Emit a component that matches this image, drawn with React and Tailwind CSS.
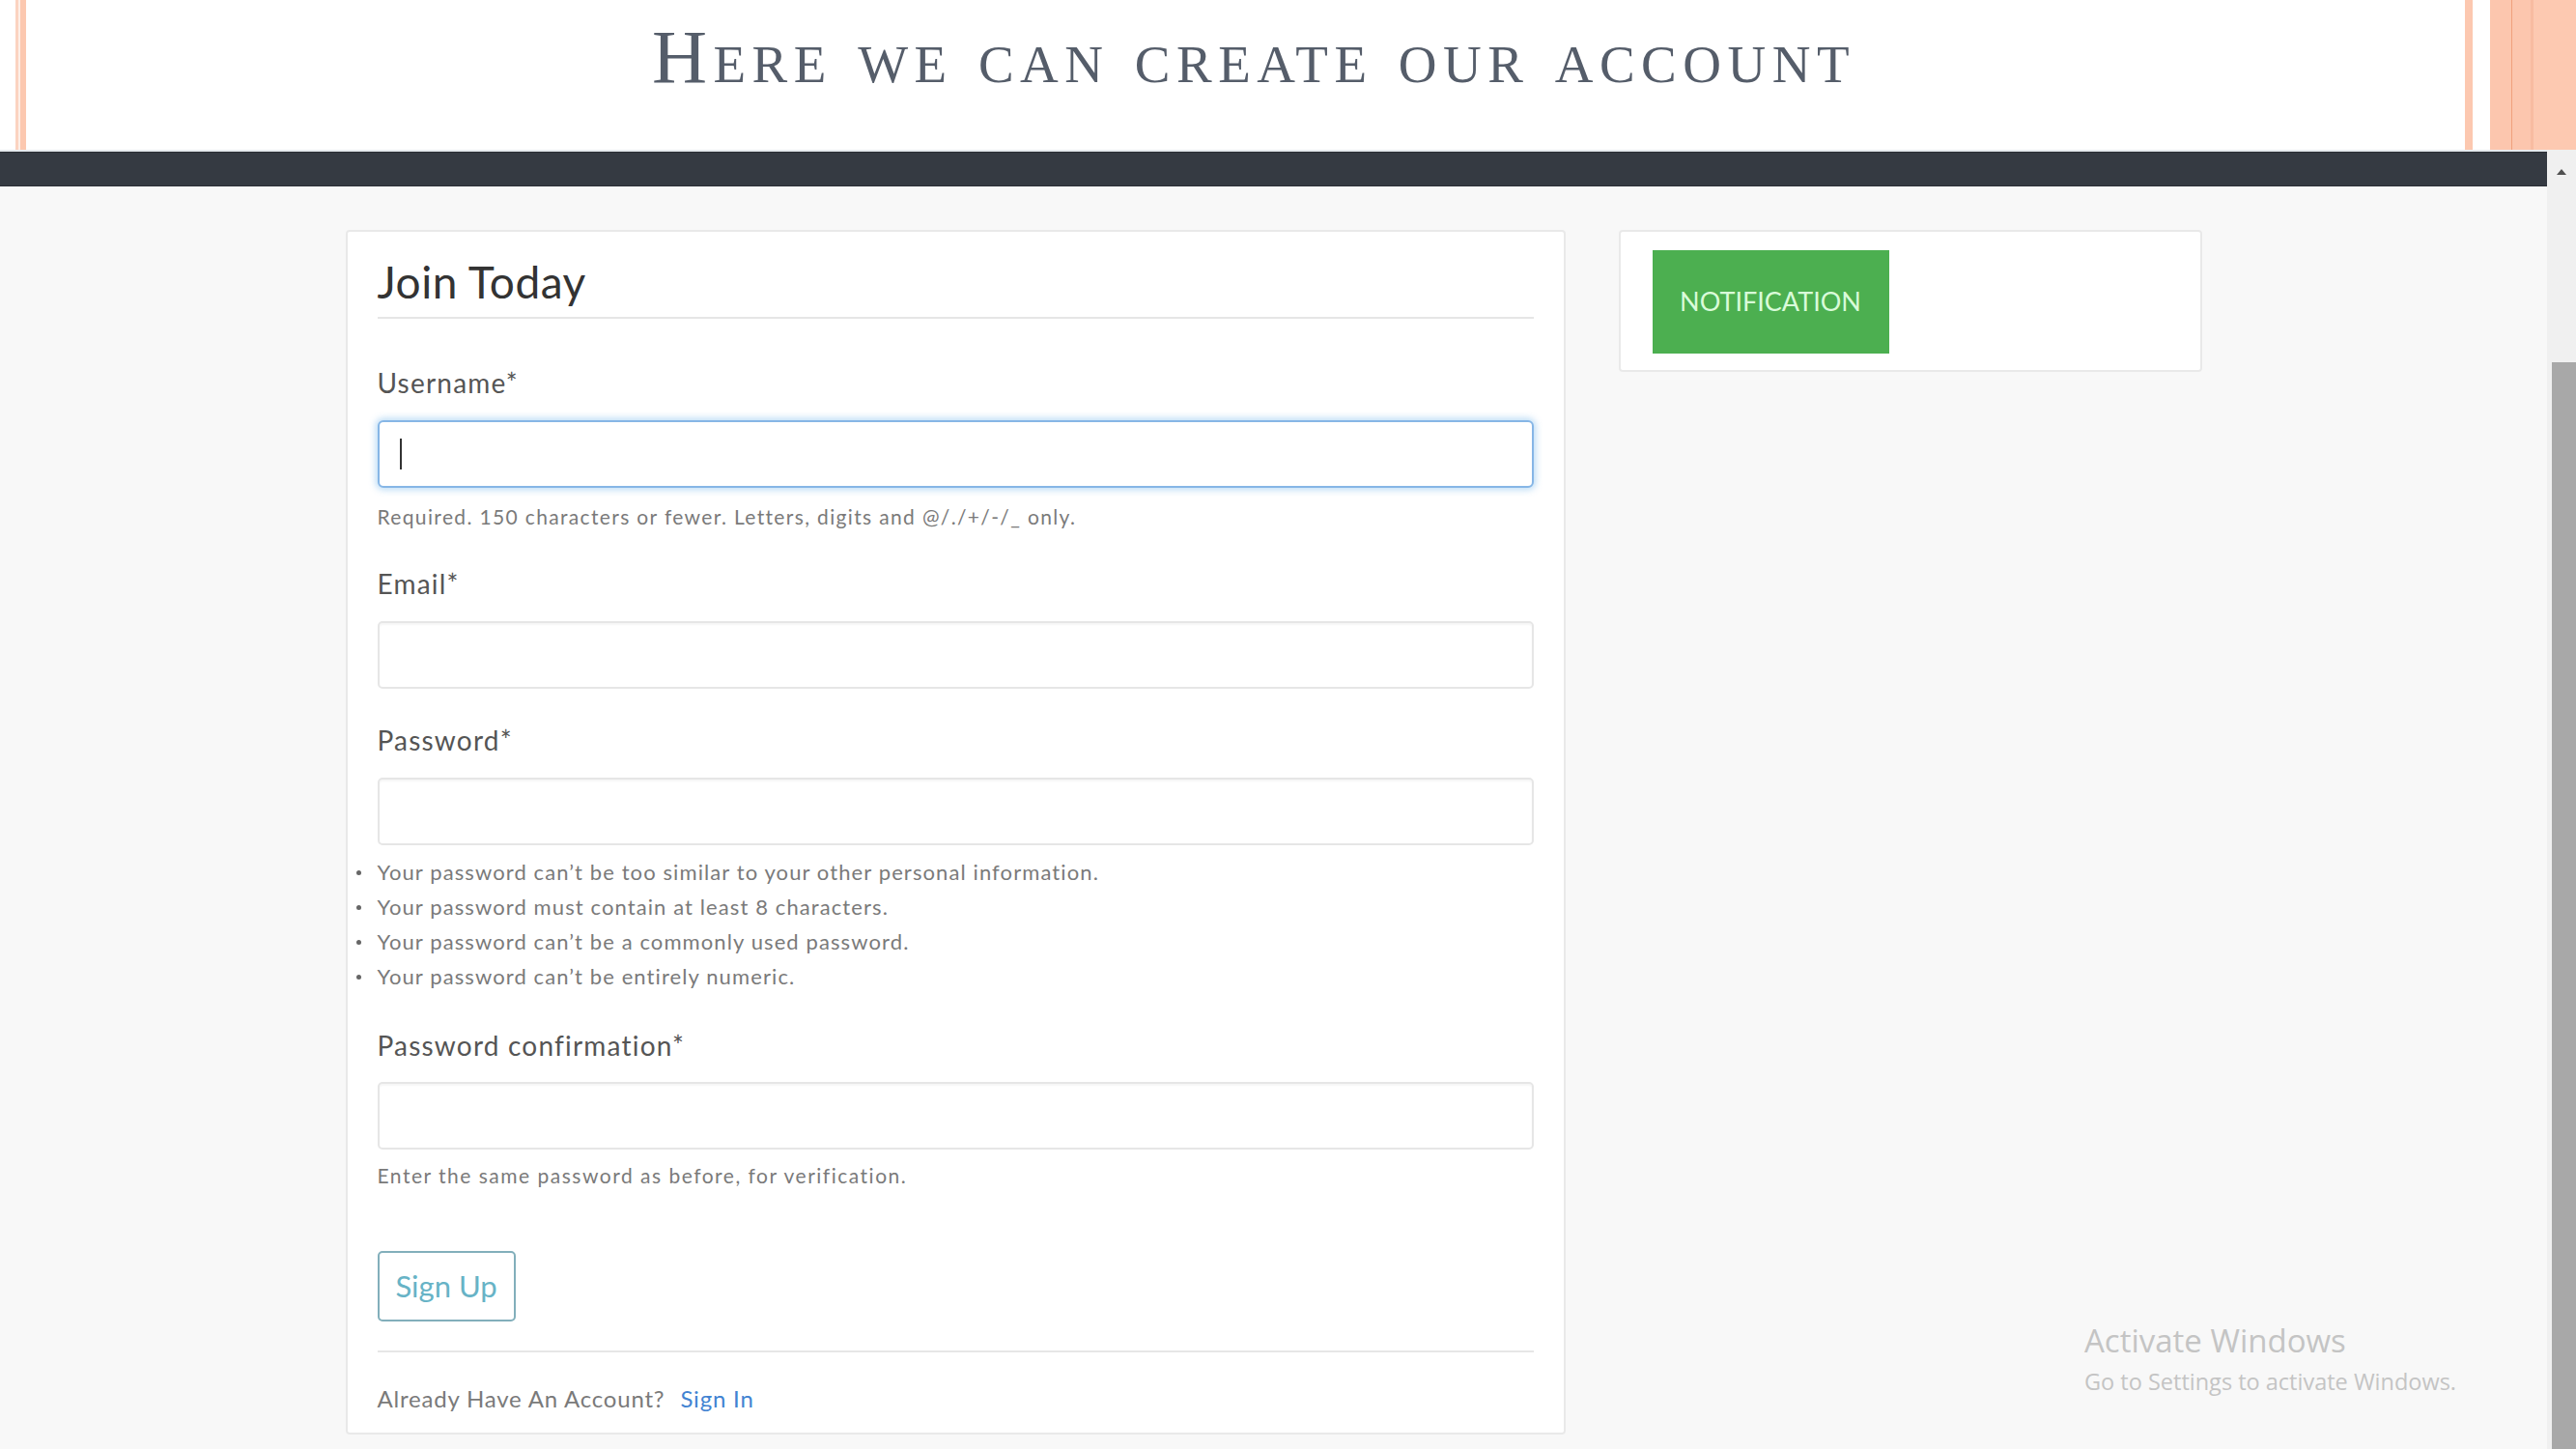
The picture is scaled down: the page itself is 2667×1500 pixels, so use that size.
import React from "react";

const hints = [
  "Your password can’t be too similar to your other personal information.",
  "Your password must contain at least 8 characters.",
  "Your password can’t be a commonly used password.",
  "Your password can’t be entirely numeric.",
];

function Label({ children, className = "" }) {
  return (
    <div className={`text-[28px] leading-none tracking-[1.2px] text-[#555] ${className}`}>
      {children}
    </div>
  );
}

function Input({ focused, className = "" }) {
  if (focused) {
    return (
      <div
        className={`h-[70px] flex items-center rounded-[6px] border-2 border-[#86b6e6] bg-white shadow-[0_0_7px_2px_rgba(102,175,233,0.45)] ${className}`}
      >
        <span className="ml-[21px] w-[2px] h-[32px] bg-[#333]" />
      </div>
    );
  }
  return (
    <div
      className={`h-[70px] rounded-[5px] border-2 border-[#e6e6e6] bg-white shadow-[inset_0_2px_2px_rgba(0,0,0,0.04)] ${className}`}
    />
  );
}

export default function App() {
  return (
    <div className="relative w-[2667px] h-[1500px] overflow-hidden bg-white flex flex-col font-['Lato',sans-serif]">
      {/* slide header */}
      <div className="h-[155px] flex shrink-0">
        <div className="w-[16px]" />
        <div className="w-[3px] bg-[#fbd3c1]" />
        <div className="w-[2px] bg-[#fdeee6]" />
        <div className="w-[6px] bg-[#fcc8b0]" />
        <div className="flex-1 min-w-0 flex justify-center pl-[17px] pt-[19px]">
          <h1 className="font-['Liberation_Serif',serif] text-[79px] leading-none text-[#555d6a] [font-variant-caps:small-caps] tracking-[6.5px] whitespace-nowrap">
            Here we can create our account
          </h1>
        </div>
        <div className="w-[8px] bg-[#fcc8b0]" />
        <div className="w-[18px] bg-white" />
        <div className="w-[22px] bg-[#fcc6ae]" />
        <div className="w-[1px] bg-[#f0a07c]" />
        <div className="w-[19px] bg-[#fcc6ae]" />
        <div className="w-[3px] bg-[#f8bca1]" />
        <div className="w-[44px] bg-[#fdc9b1]" />
      </div>

      <div className="flex-1 flex">
        {/* browser page */}
        <div className="flex-1 flex flex-col bg-[#f8f8f8]">
          <div className="h-[2px] bg-[#e6eaee]" />
          <div className="h-[36px] bg-[#353a42] border-y border-[#2b2f35]" />

          <div className="mx-auto w-[1922px] flex items-start gap-[55px] pt-[45px]">
            {/* join card */}
            <div className="w-[1263px] bg-white border-2 border-[#e9e9e9] rounded-[4px] px-[31px] pt-[29px] pb-[23px]">
              <h2 className="text-[46px] leading-none tracking-[0.5px] text-[#333] pb-[13px] border-b-2 border-[#e6e6e6]">
                Join Today
              </h2>

              <Label className="mt-[52px]">Username*</Label>
              <Input focused className="mt-[25px]" />
              <p className="mt-[19px] text-[21px] leading-none tracking-[1.35px] text-[#7a7a7a]">
                Required. 150 characters or fewer. Letters, digits and @/./+/-/_ only.
              </p>

              <Label className="mt-[45px]">Email*</Label>
              <Input className="mt-[25px]" />

              <Label className="mt-[39px]">Password*</Label>
              <Input className="mt-[25px]" />
              <ul className="mt-[10px] text-[22px] leading-[36px] tracking-[1.1px] text-[#7a7a7a]">
                {hints.map((h) => (
                  <li key={h} className="flex items-center -ml-[22px]">
                    <span className="w-[5px] h-[5px] rounded-full bg-[#666] mr-[17px]" />
                    {h}
                  </li>
                ))}
              </ul>

              <Label className="mt-[39px]">Password confirmation*</Label>
              <Input className="mt-[24px]" />
              <p className="mt-[16px] text-[21px] leading-none tracking-[1.5px] text-[#7a7a7a]">
                Enter the same password as before, for verification.
              </p>

              <button className="mt-[68px] h-[73px] w-[143px] rounded-[5px] border-2 border-[#82afbb] text-[31px] text-[#67b3c6] bg-white">
                Sign Up
              </button>

              <div className="mt-[30px] h-[2px] bg-[#e6e6e6]" />

              <p className="mt-[36px] text-[24px] leading-none tracking-[0.8px] text-[#7a7a7a]">
                Already Have An Account?
                <a className="ml-[16px] text-[#4283d2]">Sign In</a>
              </p>
            </div>

            {/* sidebar card */}
            <div className="w-[604px] bg-white border-2 border-[#e9e9e9] rounded-[4px] pl-[33px] pt-[19px] pb-[17px]">
              <div className="w-[245px] h-[107px] bg-[#4caf50] flex items-center justify-center text-[27px] text-[#d9fbd9]">
                NOTIFICATION
              </div>
            </div>
          </div>
        </div>

        {/* scrollbar */}
        <div className="w-[30px] bg-[#f0f0f0] flex flex-col items-center">
          <div className="mt-[20px] w-0 h-0 border-x-[5px] border-x-transparent border-b-[6px] border-b-[#505050]" />
          <div className="mt-[194px] ml-[4px] w-[25px] flex-1 bg-[#a8a8a8]" />
        </div>
      </div>

      {/* windows watermark */}
      <div className="absolute left-[2158px] top-[1371px] font-['Open_Sans',sans-serif] text-[#c4c4c4]">
        <div className="text-[33px] leading-none">Activate Windows</div>
        <div className="mt-[15px] text-[23.5px] leading-none">
          Go to Settings to activate Windows.
        </div>
      </div>
    </div>
  );
}
